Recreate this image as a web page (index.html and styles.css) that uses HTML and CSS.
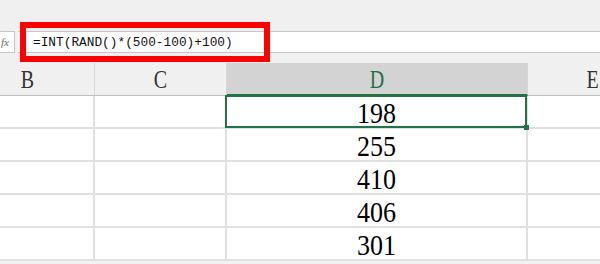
FILE: index.html
```html
<!DOCTYPE html>
<html lang="en">
<head>
  <meta charset="UTF-8">
  <title>Sheet - RAND</title>
  <link rel="stylesheet" href="styles.css">
</head>
<body>

  <div id="toolbar"></div>

  <div id="formula-row">
    <div class="fx-box"><span class="fx">fx</span></div>
    <div class="formula-input">=INT(RAND()*(500-100)+100)</div>
    <div class="highlight"></div>
  </div>

  <div class="sheet">
    <!-- header row -->
    <div class="head"><span>B</span></div>
    <div class="head"><span>C</span></div>
    <div class="head head-active"><span>D</span></div>
    <div class="head"><span>E</span></div>

    <!-- data rows -->
    <div class="cell"></div><div class="cell"></div><div class="cell num selected"><span>198</span></div><div class="cell"></div>
    <div class="cell"></div><div class="cell"></div><div class="cell num"><span>255</span></div><div class="cell"></div>
    <div class="cell"></div><div class="cell"></div><div class="cell num"><span>410</span></div><div class="cell"></div>
    <div class="cell"></div><div class="cell"></div><div class="cell num"><span>406</span></div><div class="cell"></div>
    <div class="cell"></div><div class="cell"></div><div class="cell num"><span>301</span></div><div class="cell"></div>
  </div>

</body>
</html>
```

FILE: styles.css
```css
html, body {
  margin: 0;
  padding: 0;
  overflow: hidden;
  background: #f0f0f0;
}
body {
  width: 600px;
  height: 264px;
}

#toolbar {
  height: 31px;
}

/*formula bar*/
#formula-row {
  position: relative;
  display: flex;
  gap: 3px;
  height: 22px;
  margin-bottom: 10px;
}
.fx-box {
  width: 15px;
  background: #fff;
  border: 1px solid #c6c6c6;
  border-left: none;
  box-sizing: border-box;
  overflow: hidden;
}
.fx {
  display: block;
  padding-left: 1px;
  font-family: "Liberation Serif", serif;
  font-style: italic;
  font-size: 11px;
  line-height: 20px;
  color: #666;
}
.formula-input {
  flex: 1;
  background: #fff;
  border-top: 1px solid #c6c6c6;
  border-bottom: 1px solid #c6c6c6;
  box-sizing: border-box;
  padding-left: 15px;
  font-family: "Liberation Mono", monospace;
  font-size: 12.8px;
  line-height: 21px;
  color: #111;
}
.head span, .num span {
  display: inline-block;
}
.highlight {
  position: absolute;
  left: 20px;
  top: -9px;
  width: 250px;
  height: 40px;
  box-sizing: border-box;
  border: 6px solid #ff0000;
}

/*grid*/
.sheet {
  display: grid;
  grid-template-columns: 134px 132px 301px 130px;
  grid-auto-rows: 33px;
  margin-left: -39px;
  width: 639px;
  height: 200px;
  overflow: hidden;
}
.head {
  background: #f0f0f0;
  border-right: 1px solid #d6d6d6;
  border-bottom: 1px solid #bdbdbd;
  text-align: center;
  font-family: "Liberation Serif", serif;
  font-size: 20px;
  line-height: 33px;
  color: #333;
}
.head span {
  transform: scaleY(1.3);
}
.head-active {
  background: #d3d3d3;
  color: #217346;
  border-bottom: 2px solid #217346;
}
.cell {
  background: #fff;
  border-right: 2px solid #e0e0e0;
  border-bottom: 2px solid #e0e0e0;
}
.num {
  text-align: center;
  font-family: "Liberation Serif", serif;
  font-size: 26px;
  line-height: 33px;
  color: #000;
}
.num span {
  transform: scaleY(1.15);
  padding-top: 1px;
}
.selected {
  position: relative;
}
.selected::after {
  content: "";
  position: absolute;
  left: -2px;
  top: -1px;
  right: -1px;
  bottom: -1px;
  border: 2px solid #217346;
}
.selected::before {
  content: "";
  position: absolute;
  right: -3px;
  bottom: -3px;
  width: 5px;
  height: 5px;
  background: #217346;
  z-index: 2;
}
```
